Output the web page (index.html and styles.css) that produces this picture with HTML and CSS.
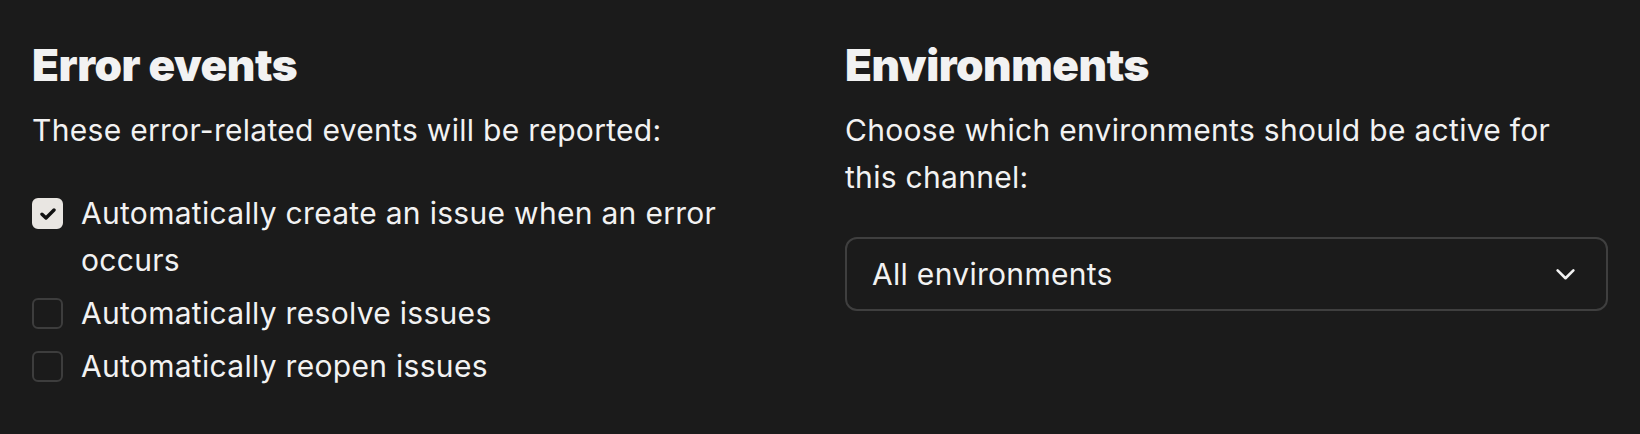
FILE: index.html
```html
<!DOCTYPE html>
<html lang="en">
<head>
  <meta charset="UTF-8">
  <meta name="viewport" content="width=device-width, initial-scale=1.0">
  <title>Alert settings</title>
  <link rel="stylesheet" href="styles.css">
</head>
<body>
  <div class="settings">
    <section class="panel">
      <h2>Error events</h2>
      <p class="desc">These error-related events will be reported:</p>
      <ul class="options">
        <li class="option">
          <span class="box checked">
            <svg viewBox="0 0 16 12" width="16" height="12"><path d="M2 6.2 L6 10 L14 2" fill="none" stroke="#111" stroke-width="3.4" stroke-linecap="round" stroke-linejoin="round"/></svg>
          </span>
          <span class="label">Automatically create an issue when an error occurs</span>
        </li>
        <li class="option">
          <span class="box"></span>
          <span class="label">Automatically resolve issues</span>
        </li>
        <li class="option">
          <span class="box"></span>
          <span class="label">Automatically reopen issues</span>
        </li>
      </ul>
    </section>

    <section class="panel">
      <h2>Environments</h2>
      <p class="desc">Choose which environments should be active for this channel:</p>
      <div class="select">
        <span>All environments</span>
        <svg class="chevron" viewBox="0 0 22 14" width="21" height="13"><path d="M2.5 2.5 L11 11 L19.5 2.5" fill="none" stroke="#f2f2f2" stroke-width="2.8" stroke-linecap="round" stroke-linejoin="round"/></svg>
      </div>
    </section>
  </div>
</body>
</html>
```

FILE: styles.css
```css
html, body {
  margin: 0;
  background: #1b1b1b;
}
body {
  font-family: Inter, "Noto Sans", sans-serif;
  color: #f2f2f2;
}
.settings {
  display: grid;
  grid-template-columns: 1fr 1fr;
  column-gap: 50px;
  padding: 39px 32px 0;
}
h2 {
  margin: 0;
  font-size: 44px;
  line-height: 52px;
  font-weight: 900;
  letter-spacing: -0.01em;
}
.desc {
  margin: 16px 0 36px;
  font-size: 30px;
  line-height: 47px;
  letter-spacing: 0.01em;
}
.options {
  list-style: none;
  margin: 0;
  padding: 0;
  display: flex;
  flex-direction: column;
  gap: 6px;
}
.option {
  display: flex;
  align-items: flex-start;
  gap: 18px;
  font-size: 30px;
  line-height: 47px;
  letter-spacing: 0.01em;
}
.box {
  flex: none;
  width: 31px;
  height: 31px;
  margin-top: 8px;
  box-sizing: border-box;
  border: 2px solid #3d3d3d;
  border-radius: 6px;
  display: flex;
  align-items: center;
  justify-content: center;
}
.box.checked {
  background: #e9e6e2;
  border-color: #e9e6e2;
}
.select {
  display: flex;
  align-items: center;
  justify-content: space-between;
  height: 74px;
  box-sizing: border-box;
  border: 2px solid #3f3f3f;
  border-radius: 12px;
  padding: 0 30px 0 25px;
  font-size: 30px;
  letter-spacing: 0.01em;
}
.chevron {
  display: block;
}
```
